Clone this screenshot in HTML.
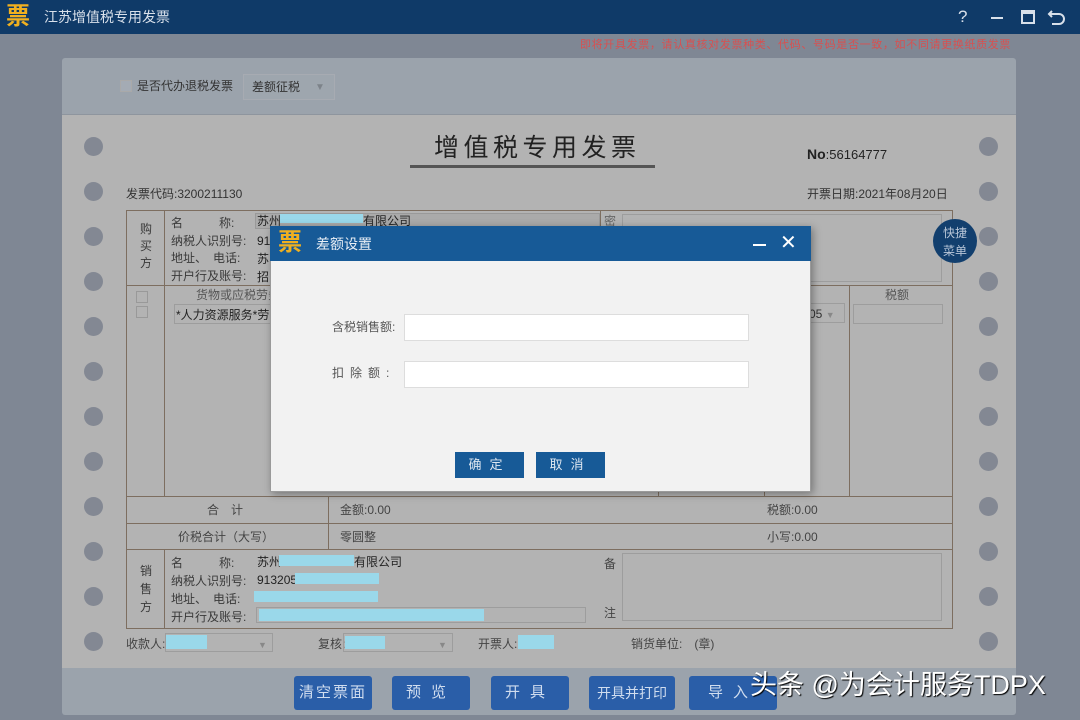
<!DOCTYPE html>
<html><head><meta charset="utf-8"><style>
*{margin:0;padding:0;box-sizing:border-box}
body{width:1080px;height:720px;overflow:hidden;background:#7f8794;font-family:"Liberation Sans","Noto Sans CJK SC",sans-serif;position:relative;color:#3a3a3a}
.a{position:absolute}
.t{position:absolute;white-space:nowrap;font-size:12px;line-height:14px}
.c{position:absolute;width:19px;height:19px;border-radius:50%;background:#838893}
.hl{position:absolute;background:#9ad8ea}
.ln{position:absolute;background:#7d6e60}
.box{position:absolute;border:1px solid #9d9d9d}
.btn{position:absolute;top:676px;height:34px;background:#2a5ea8;border-radius:3px;color:#d0ddef;font-size:16px;text-align:center;line-height:34px;letter-spacing:2px}
</style></head><body>
<div class="a" style="left:0;top:0;width:1080px;height:34px;background:#0f3a68"></div>
<div class="t" style="left:6px;top:4px;font-size:24px;line-height:26px;color:#f0b020;font-weight:bold">票</div>
<div class="t" style="left:44px;top:9px;font-size:14px;line-height:16px;color:#d8e0ea">江苏增值税专用发票</div>
<div class="t" style="left:958px;top:7px;font-size:17px;line-height:20px;color:#d8e0ea">?</div>
<div class="a" style="left:991px;top:17px;width:12px;height:2px;background:#d8e0ea"></div>
<div class="a" style="left:1021px;top:10px;width:14px;height:14px;border:2px solid #d8e0ea;border-top-width:4px"></div>
<svg class="a" style="left:1047px;top:8px" width="20" height="18"><path d="M5 3 L2 6 L5 9 M2 6 H12 a5 5 0 0 1 0 10 H5" fill="none" stroke="#d8e0ea" stroke-width="2"/></svg>
<div class="t" style="left:580px;top:38px;font-size:11px;color:#d85050;letter-spacing:0.65px">即将开具发票，请认真核对发票种类、代码、号码是否一致，如不同请更换纸质发票</div>

<div class="a" style="left:62px;top:58px;width:954px;height:657px;background:#9ba3ac;border-radius:3px"></div>
<div class="a" style="left:62px;top:114px;width:954px;height:554px;background:#b3b3b3;border-top:1px solid #8e959e"></div>
<div class="a" style="left:120px;top:80px;width:12px;height:12px;border:1px solid #a9a9a9;background:#a4abb4"></div>
<div class="t" style="left:137px;top:79px;color:#333">是否代办退税发票</div>
<div class="a" style="left:243px;top:74px;width:92px;height:26px;border:1px solid #a7abb2;background:#9ea6ae"></div>
<div class="t" style="left:252px;top:80px;color:#333">差额征税</div>
<div class="t" style="left:315px;top:81px;color:#7d838a;font-size:10px">▼</div>

<div class="c" style="left:84px;top:137px"></div><div class="c" style="left:84px;top:182px"></div><div class="c" style="left:84px;top:227px"></div><div class="c" style="left:84px;top:272px"></div><div class="c" style="left:84px;top:317px"></div><div class="c" style="left:84px;top:362px"></div><div class="c" style="left:84px;top:407px"></div><div class="c" style="left:84px;top:452px"></div><div class="c" style="left:84px;top:497px"></div><div class="c" style="left:84px;top:542px"></div><div class="c" style="left:84px;top:587px"></div><div class="c" style="left:84px;top:632px"></div>
<div class="c" style="left:979px;top:137px"></div><div class="c" style="left:979px;top:182px"></div><div class="c" style="left:979px;top:227px"></div><div class="c" style="left:979px;top:272px"></div><div class="c" style="left:979px;top:317px"></div><div class="c" style="left:979px;top:362px"></div><div class="c" style="left:979px;top:407px"></div><div class="c" style="left:979px;top:452px"></div><div class="c" style="left:979px;top:497px"></div><div class="c" style="left:979px;top:542px"></div><div class="c" style="left:979px;top:587px"></div><div class="c" style="left:979px;top:632px"></div>

<div class="t" style="left:434px;top:133px;font-size:25px;line-height:30px;letter-spacing:4.5px;color:#222">增值税专用发票</div>
<div class="a" style="left:410px;top:165px;width:245px;height:3px;background:#555"></div>
<div class="t" style="left:807px;top:146px;font-size:13px;line-height:16px;color:#222"><b style="font-size:14px">No</b>:56164777</div>
<div class="t" style="left:126px;top:187px;color:#333">发票代码:3200211130</div>
<div class="t" style="left:807px;top:187px;color:#333">开票日期:2021年08月20日</div>

<div class="a" style="left:126px;top:210px;width:827px;height:419px;border:1px solid #7d6e60"></div>
<div class="ln" style="left:164px;top:210px;width:1px;height:286px"></div>
<div class="ln" style="left:126px;top:285px;width:827px;height:1px"></div>
<div class="ln" style="left:126px;top:496px;width:827px;height:1px"></div>
<div class="ln" style="left:126px;top:523px;width:827px;height:1px"></div>
<div class="ln" style="left:126px;top:549px;width:827px;height:1px"></div>
<div class="ln" style="left:328px;top:496px;width:1px;height:53px"></div>
<div class="ln" style="left:164px;top:549px;width:1px;height:80px"></div>
<div class="ln" style="left:849px;top:285px;width:1px;height:211px"></div>
<div class="ln" style="left:764px;top:285px;width:1px;height:211px"></div>
<div class="ln" style="left:658px;top:285px;width:1px;height:211px"></div>
<div class="ln" style="left:600px;top:210px;width:1px;height:75px"></div>
<div class="t" style="left:140px;top:221px;line-height:17px;width:12px;white-space:normal">购买方</div>
<div class="t" style="left:171px;top:215px;line-height:17.5px">名　　　称:<br>纳税人识别号:<br>地址、　电话:<br>开户行及账号:</div>
<div class="a" style="left:255px;top:213px;width:345px;height:16px;background:#aaa;border:1px solid #999"></div>
<div class="t" style="left:257px;top:214px;color:#222">苏州</div>
<div class="hl" style="left:280px;top:214px;width:83px;height:9px"></div>
<div class="t" style="left:363px;top:214px;color:#222">有限公司</div>
<div class="t" style="left:257px;top:232px;line-height:18px;color:#222">91<br>苏<br>招</div>
<div class="t" style="left:604px;top:214px;color:#666">密</div>
<div class="box" style="left:622px;top:214px;width:320px;height:68px"></div>
<div class="a" style="left:136px;top:291px;width:12px;height:12px;border:1px solid #999"></div>
<div class="a" style="left:136px;top:306px;width:12px;height:12px;border:1px solid #999"></div>
<div class="t" style="left:196px;top:288px;color:#555">货物或应税劳务</div>
<div class="box" style="left:174px;top:304px;width:100px;height:20px"></div>
<div class="t" style="left:176px;top:308px;color:#222">*人力资源服务*劳务</div>
<div class="t" style="left:885px;top:288px;color:#555">税额</div>
<div class="box" style="left:853px;top:304px;width:90px;height:20px"></div>
<div class="box" style="left:800px;top:303px;width:45px;height:20px"></div>
<div class="t" style="left:809px;top:307px;color:#333">05 <span style="color:#888;font-size:9px">▼</span></div>
<div class="t" style="left:207px;top:503px;color:#444">合　计</div>
<div class="t" style="left:340px;top:503px;color:#444">金额:0.00</div>
<div class="t" style="left:767px;top:503px;color:#444">税额:0.00</div>
<div class="t" style="left:178px;top:530px;color:#444">价税合计（大写）</div>
<div class="t" style="left:340px;top:530px;color:#444">零圆整</div>
<div class="t" style="left:767px;top:530px;color:#444">小写:0.00</div>
<div class="t" style="left:140px;top:562px;line-height:18px;width:12px;white-space:normal">销售方</div>
<div class="t" style="left:171px;top:554px;line-height:18px">名　　　称:<br>纳税人识别号:<br>地址、　电话:<br>开户行及账号:</div>
<div class="t" style="left:257px;top:555px;color:#222">苏州</div><div class="hl" style="left:279px;top:555px;width:75px;height:11px"></div><div class="t" style="left:354px;top:555px;color:#222">有限公司</div>
<div class="t" style="left:257px;top:573px;color:#222">913205</div><div class="hl" style="left:295px;top:573px;width:84px;height:11px"></div>
<div class="hl" style="left:254px;top:591px;width:124px;height:11px"></div>
<div class="box" style="left:256px;top:607px;width:330px;height:16px"></div>
<div class="hl" style="left:259px;top:609px;width:225px;height:12px"></div>
<div class="t" style="left:604px;top:557px;color:#444">备</div>
<div class="t" style="left:604px;top:606px;color:#444">注</div>
<div class="box" style="left:622px;top:553px;width:320px;height:68px"></div>
<div class="t" style="left:126px;top:637px;color:#444">收款人:</div>
<div class="box" style="left:165px;top:633px;width:108px;height:19px"></div><div class="hl" style="left:166px;top:635px;width:41px;height:14px"></div>
<div class="t" style="left:258px;top:638px;color:#888;font-size:9px">▼</div>
<div class="t" style="left:318px;top:637px;color:#444">复核:</div>
<div class="box" style="left:343px;top:633px;width:110px;height:19px"></div><div class="hl" style="left:345px;top:636px;width:40px;height:13px"></div>
<div class="t" style="left:438px;top:638px;color:#888;font-size:9px">▼</div>
<div class="t" style="left:478px;top:637px;color:#444">开票人:</div><div class="hl" style="left:518px;top:635px;width:36px;height:14px"></div>
<div class="t" style="left:631px;top:637px;color:#444">销货单位:　(章)</div>

<div class="a" style="left:933px;top:219px;width:44px;height:44px;border-radius:50%;background:#123f6e"></div>
<div class="t" style="left:943px;top:224px;line-height:18px;color:#b8c6d8">快捷<br>菜单</div>

<div class="btn" style="left:294px;width:78px;font-size:15px">清空票面</div>
<div class="btn" style="left:392px;width:78px;letter-spacing:10px;font-size:15px">预览</div>
<div class="btn" style="left:491px;width:78px;letter-spacing:10px;font-size:15px">开具</div>
<div class="btn" style="left:589px;width:86px;font-size:14px;letter-spacing:0">开具并打印</div>
<div class="btn" style="left:689px;width:88px;letter-spacing:10px;font-size:15px">导入</div>
<div class="t" style="left:750px;top:669px;font-size:27px;line-height:32px;color:#fff;text-shadow:1px 1px 1px #000">头条 @为会计服务TDPX</div>

<div class="a" style="left:270px;top:226px;width:541px;height:266px;background:#f2f2f2;border:1px solid #9a9a9a;box-shadow:2px 2px 8px rgba(0,0,0,.35)"></div>
<div class="a" style="left:270px;top:226px;width:541px;height:35px;background:#175a97"></div>
<div class="t" style="left:278px;top:229px;font-size:24px;line-height:28px;color:#f0b020;font-weight:bold">票</div>
<div class="t" style="left:316px;top:236px;font-size:14px;line-height:16px;color:#e8eef5">差额设置</div>
<div class="a" style="left:753px;top:244px;width:13px;height:2px;background:#fff"></div>
<div class="t" style="left:780px;top:232px;font-size:20px;line-height:22px;color:#fff">✕</div>
<div class="t" style="left:332px;top:320px;color:#555">含税销售额:</div>
<div class="t" style="left:332px;top:366px;color:#555;letter-spacing:6px">扣除额<span style="letter-spacing:0">:</span></div>
<div class="a" style="left:404px;top:314px;width:345px;height:27px;background:#fff;border:1px solid #ddd"></div>
<div class="a" style="left:404px;top:361px;width:345px;height:27px;background:#fff;border:1px solid #ddd"></div>
<div class="a" style="left:455px;top:452px;width:69px;height:26px;background:#175a97;color:#dde6f0;font-size:13px;line-height:26px;text-align:center;letter-spacing:8px">确定</div>
<div class="a" style="left:536px;top:452px;width:69px;height:26px;background:#175a97;color:#dde6f0;font-size:13px;line-height:26px;text-align:center;letter-spacing:8px">取消</div>
</body></html>
